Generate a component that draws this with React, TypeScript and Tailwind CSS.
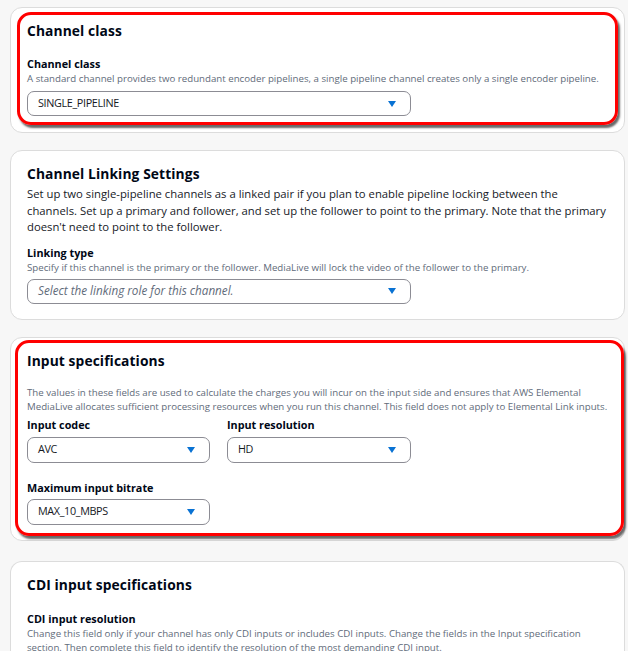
import React from 'react';

const Arrow = () => (
  <svg width="8" height="6" viewBox="0 0 8 6" className="shrink-0">
    <path d="M0 0 H8 L4 6 Z" fill="#0972d3" />
  </svg>
);

const Select = ({ value, placeholder, className = '' }: { value?: string; placeholder?: string; className?: string }) => (
  <div
    className={`flex items-center justify-between rounded-[7px] border border-[#8c8c94] bg-white pl-[10px] pr-[14px] ${className}`}
  >
    {value ? (
      <span className="text-[10.8px] tracking-[-0.35px] text-[#16191f]">{value}</span>
    ) : (
      <span className="text-[11.7px] italic text-[#5f6b7a]">{placeholder}</span>
    )}
    <Arrow />
  </div>
);

const Card = ({ children, className = '' }: { children: React.ReactNode; className?: string }) => (
  <div className={`relative rounded-[12px] border border-[#dcdcdc] bg-white px-4 pt-[11px] ${className}`}>
    {children}
  </div>
);

const Highlight = ({ className }: { className: string }) => (
  <div
    className={`pointer-events-none absolute rounded-[14px] border-[3px] border-[#ff0000] shadow-[2px_3px_2px_rgba(40,40,40,0.7)] ${className}`}
  />
);

const Title = ({ children }: { children: React.ReactNode }) => (
  <h2 className="text-[13.8px] font-bold leading-[24px] tracking-[0.1px]">{children}</h2>
);

const Label = ({ children, className = '' }: { children: React.ReactNode; className?: string }) => (
  <div className={`text-[10.8px] font-bold leading-[16px] ${className}`}>{children}</div>
);

const Hint = ({ children, className = '' }: { children: React.ReactNode; className?: string }) => (
  <p className={`whitespace-nowrap text-[9.7px] leading-[14px] text-[#5f6b7a] ${className}`}>{children}</p>
);

export default function App() {
  return (
    <div
      className="min-h-[651px] overflow-hidden bg-[#f7f7f7] pl-[10px] pr-[3px] pt-[7px] text-[#000716]"
      style={{ fontFamily: '"Open Sans", "Noto Sans", sans-serif' }}
    >
      <Card className="pb-4">
        <Highlight className="left-[6px] top-[4px] right-[6px] bottom-[7px]" />
        <Title>Channel class</Title>
        <Label className="mt-[13px]">Channel class</Label>
        <Hint>
          A standard channel provides two redundant encoder pipelines, a single pipeline channel creates only a single encoder pipeline.
        </Hint>
        <Select value="SINGLE_PIPELINE" className="mt-[5px] h-[25px] w-[384px]" />
      </Card>

      <Card className="mt-[17px] pb-[15px]">
        <Title>Channel Linking Settings</Title>
        <p className="text-[11.3px] leading-[16.5px] text-[#16191f]">
          Set up two single-pipeline channels as a linked pair if you plan to enable pipeline locking between the
          channels. Set up a primary and follower, and set up the follower to point to the primary. Note that the primary
          doesn't need to point to the follower.
        </p>
        <Label className="mt-[9px]">Linking type</Label>
        <Hint>
          Specify if this channel is the primary or the follower. MediaLive will lock the video of the follower to the primary.
        </Hint>
        <Select placeholder="Select the linking role for this channel." className="mt-[4px] h-[25px] w-[384px]" />
      </Card>

      <Card className="mt-[17px] pb-[15px]">
        <Highlight className="left-[4px] top-[2px] right-0 bottom-[4px]" />
        <Title>Input specifications</Title>
        <Hint className="mt-[13px]">
          The values in these fields are used to calculate the charges you will incur on the input side and ensures that AWS Elemental
          <br />
          MediaLive allocates sufficient processing resources when you run this channel. This field does not apply to Elemental Link inputs.
        </Hint>
        <div className="mt-[3px] flex gap-[17px]">
          <div className="w-[183px]">
            <Label>Input codec</Label>
            <Select value="AVC" className="mt-[4px] h-[26px] w-full" />
          </div>
          <div className="w-[184px]">
            <Label>Input resolution</Label>
            <Select value="HD" className="mt-[4px] h-[26px] w-full" />
          </div>
        </div>
        <Label className="mt-[17px]">Maximum input bitrate</Label>
        <Select value="MAX_10_MBPS" className="mt-[3px] h-[26px] w-[183px]" />
      </Card>

      <Card className="mt-[20px] h-[100px] rounded-b-none border-b-0">
        <Title>CDI input specifications</Title>
        <Label className="mt-[14px]">CDI input resolution</Label>
        <Hint>
          Change this field only if your channel has only CDI inputs or includes CDI inputs. Change the fields in the Input specification
          <br />
          section. Then complete this field to identify the resolution of the most demanding CDI input.
        </Hint>
      </Card>
    </div>
  );
}
